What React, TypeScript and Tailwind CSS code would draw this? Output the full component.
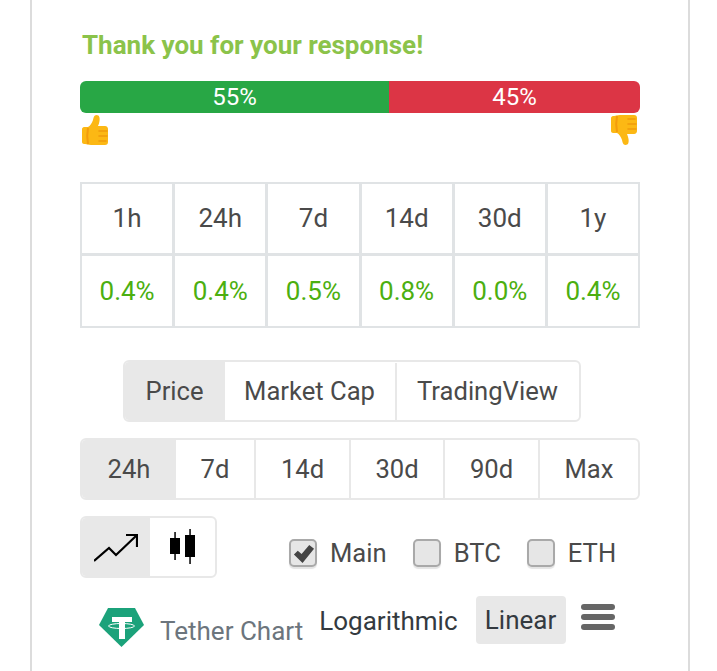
const periods = [
  { label: "1h", change: "0.4%" },
  { label: "24h", change: "0.4%" },
  { label: "7d", change: "0.5%" },
  { label: "14d", change: "0.8%" },
  { label: "30d", change: "0.0%" },
  { label: "1y", change: "0.4%" },
];

const ranges = [
  { label: "24h", w: "w-[94px]" },
  { label: "7d", w: "w-[80px]" },
  { label: "14d", w: "w-[95px]" },
  { label: "30d", w: "w-[94px]" },
  { label: "90d", w: "w-[95px]" },
  { label: "Max", w: "flex-1" },
];

function Thumb({ down }: { down?: boolean }) {
  return (
    <svg viewBox="0 0 30 32" className={down ? "w-[30px] h-[32px] -scale-y-100" : "w-[30px] h-[32px]"}>
      <path
        d="M2 15c0-1 1-2 2-2h4c2-1 4-4 5-7 .5-2 1-5 3.500-5 3 0 3.500 3 3 6-.3 2-1 4-1.500 5h7c2 0 3 1.500 3 3v13c0 2-1 3-3 3H11c-3 0-4-1-6-1H4c-1 0-2-1-2-2z"
        fill="#fcb814"
      />
      <path d="M19 17h8M19 22h8M19 27h7" stroke="#ef9a0b" strokeWidth="1.500" fill="none" strokeLinecap="round" />
      <path d="M8 14c-1 5-1 11 0 16" stroke="#f39c0c" strokeWidth="2" fill="none" />
    </svg>
  );
}

function Check({ label, checked, className }: { label: string; checked?: boolean; className?: string }) {
  return (
    <label className={`flex items-center ${className ?? ""}`}>
      <span className="w-[28px] h-[28px] rounded-[5px] border-2 border-[#a9a9a9] bg-[#e6e6e6] shadow-[0_2px_1px_#e4e4e4] flex items-center justify-center">
        {checked && (
          <svg viewBox="0 0 24 24" className="w-[23px] h-[23px]">
            <path d="M2 13l4-4 4 3.500L18 3l5 4-12 15z" fill="#444" />
          </svg>
        )}
      </span>
      <span className="ml-[13px] mt-[2px] text-[25.6px] leading-none text-[#4a4a4a]">{label}</span>
    </label>
  );
}

export default function App() {
  return (
    <div className="w-[717px] h-[671px] overflow-hidden bg-white font-['Roboto',sans-serif]">
      <div className="ml-[30px] w-[660px] h-[671px] border-x-2 border-[#dcdcdc] pl-[48px] pr-[48px] pt-[30px]">
        <h3 className="ml-[2px] text-[26px] leading-[30px] font-bold text-[#8bc34a] whitespace-nowrap">
          Thank you for your response!
        </h3>

        <div className="mt-[21px] flex h-[32px] rounded-[6px] overflow-hidden text-[24px] text-white">
          <div className="w-[309px] bg-[#28a745] flex items-center justify-center">55%</div>
          <div className="flex-1 bg-[#dc3545] flex items-center justify-center">45%</div>
        </div>
        <div className="mt-[1px] flex justify-between pr-[1px] h-[32px]">
          <Thumb />
          <Thumb down />
        </div>

        {/* percent change by period */}
        <div className="mt-[36px]">
          <div className="flex h-[73px]">
            {periods.map((p, i) => (
              <div
                key={p.label}
                className={`flex-1 border-2 border-[#e0e3e5] flex items-center justify-center text-[26px] text-[#4a4a4a] ${i ? "-ml-px" : ""}`}
              >
                {p.label}
              </div>
            ))}
          </div>
          <div className="flex h-[74px] -mt-px">
            {periods.map((p, i) => (
              <div
                key={p.label}
                className={`flex-1 border-2 border-[#e0e3e5] flex items-center justify-center text-[26px] text-[#4caf10] ${i ? "-ml-px" : ""}`}
              >
                {p.change}
              </div>
            ))}
          </div>
        </div>

        <div className="mt-[32px] flex justify-center pr-[17px]">
          <div className="flex h-[62px] pt-[1px] rounded-[6px] border-2 border-[#e8e8e8] overflow-hidden text-[25.6px] text-[#4a4a4a]">
            <div className="w-[100px] -mt-[1px] pt-[1px] bg-[#e8e8e8] flex items-center justify-center">Price</div>
            <div className="w-[172px] border-r-2 border-[#e8e8e8] flex items-center justify-center">Market Cap</div>
            <div className="w-[182px] flex items-center justify-center">TradingView</div>
          </div>
        </div>

        <div className="mt-[16px] flex h-[62px] rounded-[6px] border-2 border-[#e8e8e8] overflow-hidden text-[25.6px] text-[#4a4a4a]">
          {ranges.map((r, i) => (
            <div
              key={r.label}
              className={`${r.w} flex items-center justify-center ${i === 0 ? "bg-[#e8e8e8]" : "border-r-2 border-[#e8e8e8] last:border-r-0"}`}
            >
              {r.label}
            </div>
          ))}
        </div>

        <div className="mt-[16px] flex items-start">
          <div className="flex h-[62px] w-[137px] rounded-[6px] border-2 border-[#e8e8e8] overflow-hidden">
            <div className="w-[68px] bg-[#e8e8e8] flex items-center justify-center">
              <svg viewBox="0 0 44 28" className="w-[44px] h-[28px] mt-[1px] ml-[-1px]" fill="none" stroke="#000" strokeWidth="2.200">
                <path d="M0 27l15-13 7 7L43 1" />
                <path d="M32 1h11v12" />
              </svg>
            </div>
            <div className="flex-1 flex items-center justify-center">
              <svg viewBox="0 0 26 36" className="w-[26px] h-[36px] ml-[-2px]" fill="#000">
                <rect x="1" y="9" width="10" height="16" />
                <rect x="5.300" y="3" width="1.500" height="28" />
                <rect x="16" y="6" width="10" height="22" />
                <rect x="20.300" y="0" width="1.500" height="35" />
              </svg>
            </div>
          </div>
          <Check label="Main" checked className="ml-[72px] mt-[23px]" />
          <Check label="BTC" className="ml-[26px] mt-[23px]" />
          <Check label="ETH" className="ml-[26px] mt-[23px]" />
        </div>

        <div className="mt-[18px] flex items-start">
          <svg viewBox="0 0 46 40" className="ml-[19px] mt-[12px] w-[46px] h-[40px] shrink-0">
            <path d="M9 0h27l9 17-22.500 22L0 17z" fill="#1ba27a" />
            <path d="M13 9h20v5h-7v17h-6V14h-7z" fill="#fff" />
            <ellipse cx="22.500" cy="18" rx="13" ry="2.500" fill="none" stroke="#fff" strokeWidth="1" />
          </svg>
          <span className="ml-[15px] mt-[20px] text-[26px] leading-[30px] text-[#6c757d] whitespace-nowrap">Tether Chart</span>
          <span className="ml-[16px] mt-[10px] text-[26px] leading-[30px] text-[#343a40] whitespace-nowrap">Logarithmic</span>
          <div className="ml-[18px] w-[90px] h-[48px] shrink-0 rounded-[4px] bg-[#e8e8e8] flex items-center justify-center text-[26px] text-[#343a40]">
            Linear
          </div>
          <div className="ml-[15px] mt-[8px] flex flex-col gap-[4px] shrink-0">
            <span className="block w-[34px] h-[6px] rounded-full bg-[#666]" />
            <span className="block w-[34px] h-[6px] rounded-full bg-[#666]" />
            <span className="block w-[34px] h-[6px] rounded-full bg-[#666]" />
          </div>
        </div>

        {/* top edge of the control under the toolbar */}
        <div className="mt-[25px] ml-[507px] w-[81px] h-[40px] rounded-[6px] border-2 border-[#eeeeee]" />
      </div>
    </div>
  );
}
